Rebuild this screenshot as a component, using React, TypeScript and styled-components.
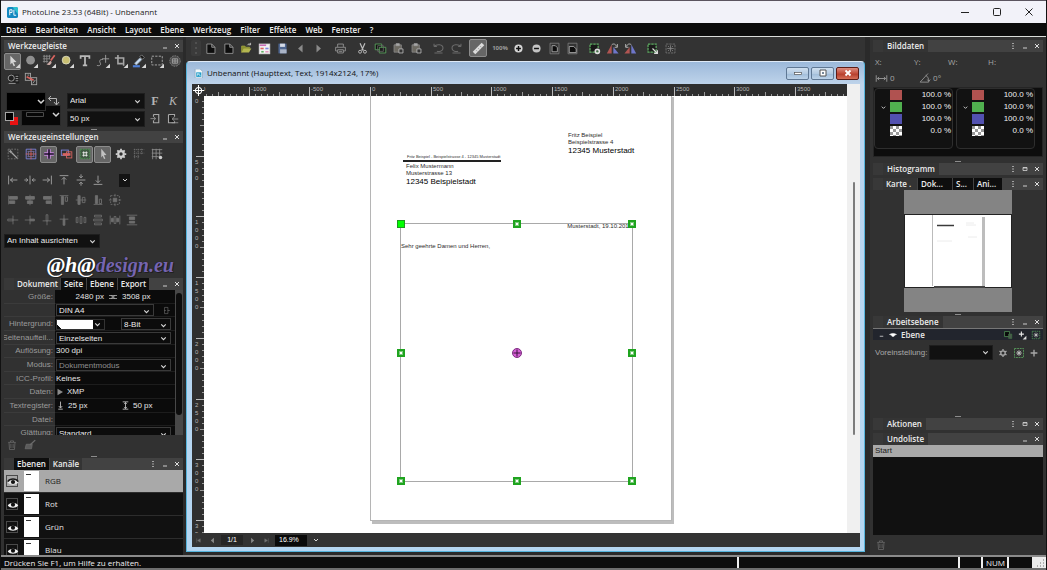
import React from "react";
import styled, { createGlobalStyle, css } from "styled-components";

const UI = '"Open Sans", "Noto Sans", sans-serif';
const NARROW = '"Liberation Sans", Arial, sans-serif';

const Global = createGlobalStyle`
  *, *::before, *::after { box-sizing: border-box; }
  body { margin: 0; background: #1c1c1c; }
  button, select, input { font: inherit; color: inherit; margin: 0; padding: 0; border: 0; background: none; }
  a { color: inherit; text-decoration: none; }
`;

/* ---------- icons ---------- */

const R = "#d9645f";
const B = "#7f86e0";
const G = "#5fae63";
const Y = "#c9bf72";

const corner = <path d="M16 11v5h-5z" fill="#d8d8d8" stroke="none" />;

const icons: Record<string, React.ReactNode> = {
  pointer: <><path d="M5 2l7 7-3.500.3 1.900 3.800-1.600.8-1.800-3.900L5 12z" fill="#d6d6d6" stroke="none" />{corner}</>,
  pointerPlain: <path d="M6 2l6 7-3 .3 1.700 3.700-1.500.7-1.700-3.700L6 12z" fill="#c2c2c2" stroke="none" />,
  ellipse: <><circle cx="7.500" cy="7" r="5" fill="#8f8f8f" stroke="none" />{corner}</>,
  gridBrush: <><path d="M1 2.500h9M1 5.500h8M1 8.500h6M2.500 1v9M5.500 1v9M8.500 1v5" stroke="#8a8a8a" /><path d="M14.500 1.500l-4.500 6" stroke={R} strokeWidth="2" /><path d="M10 8c-2 0-2 3-5 3.500 2 2 6 1 6-2.500z" fill="#c9a9a5" stroke="none" />{corner}</>,
  bulb: <><circle cx="7" cy="7" r="4.500" fill={Y} stroke="#d9d9c0" />{corner}</>,
  text: <path d="M3 5.500V2.500h10v3M8 2.500v11M5.500 13h5" strokeWidth="2" stroke="#b9b9b9" />,
  path: <><path d="M1 13c3 1 5-.5 4-2.500s-2-4 3-4.500M11 1v9M7 5.500h8" />{corner}</>,
  crop: <><path d="M4.500 1v10H10M1 4.500h10v9" strokeWidth="1.800" />{corner}</>,
  pipette: <><path d="M3 10.500l6-6 2 2-6 6z" fill="#c9dcef" stroke="#9ab" /><path d="M9 3l2-2 3 3-2 2z" fill="#111" stroke="#888" /><path d="M1 14h8" stroke="#4f80d8" strokeWidth="2.500" />{corner}</>,
  marquee: <><path d="M2 2.500h12v10H2z" strokeDasharray="2.500 1.500" stroke="#b5b5b5" />{corner}</>,
  globe: <><circle cx="8" cy="8" r="6" fill="#4c4c4c" stroke="#858585" strokeDasharray="2 1" /><path d="M5 5.500h6v5H5zM5 8h6M8 5.500v5" /></>,
  info: <><rect x="3" y="3" width="12" height="10" fill="#1f1f1f" stroke="none" /><circle cx="6" cy="7" r="3.500" /><path d="M11 5h3M11 7.500h3M11 10h3M3 13h8" /></>,
  replace: <><rect x="1.500" y="1.500" width="6" height="8" /><rect x="8.500" y="6.500" width="6" height="8" /><path d="M3 5.500l8 4" stroke={R} strokeWidth="2" /><path d="M10 13l3-4M4 3.500h2" /></>,
  toDoc: <><path d="M6 2h7v11H6v-3M6 2v3" strokeWidth="1.500" /><path d="M2 7.500h6M6 5l3 2.500L6 10" /></>,
  fromDoc: <><path d="M2 2h8v3M2 2v11h8v-2" strokeWidth="1.500" fill="#1b1b1b" /><path d="M7 8h8M9.500 5.500L7 8l2.500 2.500M6 13h9" /></>,
  wand: <><path d="M2.500 2.500h11v11h-11z" strokeDasharray="2 1.500" stroke="#777" /><path d="M6 6l7 7" strokeWidth="1.500" /><path d="M5 3v4M3 5h4" /></>,
  gridX: <><path d="M2.500 2.500h11v11h-11z" stroke={B} /><path d="M8 2v12M2 8h12" stroke={R} /><path d="M5 5v6M11 5v6M4 5h8M4 11h8" stroke="#7c6f9c" /></>,
  plusPurple: <><path d="M8 2.500v11M2.500 8h11" stroke="#c98be0" strokeWidth="4" /><path d="M8 2.500v11M2.500 8h11" stroke="#1a0c26" strokeWidth="1.800" /></>,
  mergeRB: <><rect x="1.500" y="3.500" width="8" height="6" stroke={B} /><rect x="7.500" y="5.500" width="6" height="7" stroke={R} /><path d="M3 8.500h9" stroke={R} strokeWidth="3" /></>,
  snap: <><path d="M2.500 2.500h11v11h-11z" stroke="#4f9a54" fill="#3f5a41" strokeDasharray="2 1" /><path d="M6.500 5v6M9.500 5v6M5 6.500h6M5 9.500h6" stroke="#ececec" /></>,
  gear: <><circle cx="8" cy="8" r="3.200" strokeWidth="2.500" stroke="#d0d0d0" /><path d="M8 2v2M8 12v2M2 8h2M12 8h2M3.800 3.800l1.500 1.500M10.700 10.700l1.500 1.500M12.200 3.800l-1.500 1.500M5.300 10.700l-1.500 1.500" strokeWidth="2" stroke="#d0d0d0" /></>,
  gearSmall: <><circle cx="8" cy="8" r="2.500" strokeWidth="1.500" /><path d="M8 3.500v2M8 10.500v2M4 5.800l1.700 1M10.300 9.200l1.700 1M12 5.800l-1.700 1M5.700 9.200l-1.700 1" strokeWidth="1.500" /></>,
  grid: <path d="M2 3h12M2 7h12M2 11h7M3 2v12M7 2v12M11 2v7" stroke="#6d6d6d" strokeDasharray="1.500 .8" />,
  gridDot: <><path d="M2 3h12M2 7h12M2 11h8M3 2v12M7 2v12M11 2v8" stroke="#8c8c8c" /><circle cx="12" cy="12" r="2" fill="#ccc" stroke="none" /></>,
  aL: <path d="M3 3v10M5 8h8M8 5.500L5 8l3 2.500" />,
  aC: <path d="M8 3v10M1.500 8h4M3.500 6l2 2-2 2M14.500 8h-4M12.500 6l-2 2 2 2" />,
  aR: <path d="M13 3v10M3 8h8M8 5.500L11 8l-3 2.500" />,
  aT: <path d="M3 3h10M8 5v8M5.500 7.500L8 5l2.500 2.500" />,
  aM: <path d="M3 8h10M8 1.500v4M6 3.500l2 2 2-2M8 14.500v-4M6 12.500l2-2 2 2" />,
  aB: <path d="M3 13h10M8 3v8M5.500 8.500L8 11l2.500-2.500" />,
  bL: <><path d="M3 3v10" /><path d="M4 4h9v3H4zM4 9h6v3H4z" fill="currentColor" /></>,
  bC: <><path d="M8 2v12" /><path d="M3 4h10v3H3zM5 9h6v3H5z" fill="currentColor" /></>,
  bR: <><path d="M13 3v10" /><path d="M4 4h8v3H4zM7 9h5v3H7z" fill="currentColor" /></>,
  bT: <><path d="M3 3h10" /><path d="M5 4h2.500v9H5z" fill="currentColor" /><path d="M9.500 4.500h2.500v5H9.500z" /></>,
  bM: <><path d="M2 8h12" /><path d="M4.500 3h2.500v10H4.500z" fill="currentColor" /><path d="M9.500 5h3v6h-3z" /></>,
  bB: <><path d="M3 13h10" /><path d="M5 3h2.500v9H5z" fill="currentColor" /><path d="M9.500 7h2.500v5H9.500z" /></>,
  bX: <><path d="M3 3h10v10H3z" strokeDasharray="2 1.500" /><path d="M6 6h4v4H6zM8 1v3M8 12v3M1 8h3M12 8h3" fill="currentColor" /></>,
  cA: <><path d="M8 3v10" /><path d="M2 7h6v2H2zM8 8h6" /></>,
  cB: <><path d="M8 3v10M2 8h6" /><path d="M8 7h5v2H8z" fill="currentColor" /></>,
  cC: <><path d="M3 9h10M8 9v5" /><path d="M7 2h2v7H7z" /></>,
  cD: <><path d="M3 7h10M8 2v5" /><path d="M7 7h2v7H7z" fill="currentColor" /></>,
  cE: <path d="M2.500 5h2v6h-2zM7 4h2v8H7zM11.500 5h2v6h-2z" />,
  cF: <path d="M4 2.500h8v2H4zM3 7h10v2H3zM4 11.500h8v2H4z" />,
  cG: <><path d="M2.500 3v10M13.500 3v10M7 4h2v8H7z" /><path d="M4 6h2v4H4zM10 6h2v4h-2z" fill="currentColor" /></>,
  cH: <><path d="M2 2.500h12M2 13.500h12" /><path d="M5 4.500h6v3H5zM5 9.500h6v2H5z" fill="currentColor" /></>,
  doc: <path d="M3.500 2.500h6l4 4v7.500h-10z M9.500 2.500v4h4" fill="#0d0d0d" stroke="#a0a0a0" />,
  open: <><path d="M2 13V5h4l1 1.500h5V8" fill="#8a8f2e" stroke="#9da03e" /><path d="M2 13l2.500-5H14l-3 5z" fill="#b4b650" stroke="none" /><path d="M9 4c1-2 3-2 4-1M13 1v2.500h-2.500" stroke="#ccc" /></>,
  browse: <><rect x="1.500" y="2.500" width="13" height="12" fill="#f4f4f4" stroke="#ddd" /><path d="M2 4h8" stroke="#c76fb8" strokeWidth="2" /><path d="M3 8h4" stroke={R} strokeWidth="2" /><path d="M9 8h4" stroke={B} strokeWidth="2" /><path d="M4 12h3" stroke={G} strokeWidth="2" /><path d="M9 12h4" stroke="#e09ac0" strokeWidth="2" /></>,
  save: <><path d="M3 2h10v12H3z" fill="#4f6791" stroke="none" /><path d="M5 2h6v4H5z" fill="#d5dbe6" stroke="none" /><path d="M5 9h8v5H5z" fill="#aab4c6" stroke="none" /></>,
  prev: <path d="M10.500 3v10L5 8z" fill="#8a8a8a" stroke="none" />,
  next: <path d="M5.500 3v10L11 8z" fill="#8a8a8a" stroke="none" />,
  print: <><path d="M4.500 6V2.500h7V6M4.500 11H2V6.500h12V11h-2.500" /><path d="M4.500 9.500h7v4h-7zM6 11.500h4" /></>,
  cut: <><path d="M5 1.500l4 9M11 1.500l-4 9" strokeWidth="1.500" stroke="#bdbdbd" /><circle cx="5" cy="12" r="1.800" stroke="#ccc" /><circle cx="11" cy="12" r="1.800" stroke="#ccc" /></>,
  copy: <><path d="M1.500 2.500h8v7h-8z" fill="#111" stroke={G} /><path d="M6.500 6.500h8v7h-8z" fill="#1c1c1c" stroke={G} /><path d="M4.500 4.500h7v7h-7z" stroke="#666" /></>,
  paste: <><path d="M2.500 3.500h9v9h-9z" fill="#6d6a62" stroke="#8a8a8a" /><path d="M5 2h4v2.500H5z" fill="#aaa" /><path d="M8.500 8.500h5v5h-5z" fill="#333" stroke="#bbb" /></>,
  undo: <path d="M2.500 5.500H6M2.500 5.500V2M2.500 5.500C6 2 13.500 3 13.500 7.500S8 12 6 11.500M3 13.500h10" stroke="#6a6a6a" strokeWidth="1.300" />,
  redo: <path d="M13.500 5.500H10M13.500 5.500V2M13.500 5.500C10 2 2.500 3 2.500 7.500S8 12 10 11.500M3 13.500h10" stroke="#6a6a6a" strokeWidth="1.300" />,
  measure: <><path d="M2.500 13.500l11-11" stroke="#dcdcdc" strokeWidth="4.500" /><path d="M5 10l1.500 1.500M7.500 7.500L9 9M10 5l1.500 1.500" stroke="#999" /></>,
  zoomIn: <><circle cx="8" cy="8" r="5" fill="#d5d5d5" stroke="none" /><path d="M8 5v6M5 8h6" stroke="#111" strokeWidth="1.800" /></>,
  zoomOut: <><circle cx="8" cy="8" r="5" fill="#c4c4c4" stroke="none" /><path d="M5 8h6" stroke="#111" strokeWidth="1.800" /></>,
  fitPage: <><path d="M2.500 1.500h11v13h-11z" stroke="#7d7d7d" /><path d="M5 4.500h4l2.500 2.500v5H5z" fill="#0d0d0d" stroke="#b5b5b5" /></>,
  fitWidth: <><path d="M2.500 1.500h11v13h-11z" stroke="#7d7d7d" /><path d="M4 5.500h5.500l3 3V13H4z" fill="#0d0d0d" stroke="#b5b5b5" /></>,
  selSettings: <><path d="M2.500 2.500h10v10h-10z" stroke={G} fill="#181818" strokeDasharray="3 1" strokeWidth="1.500" /><circle cx="11.500" cy="11.500" r="2.500" strokeWidth="2" stroke="#ddd" /></>,
  flipH: <><path d="M7 3v11H1z" fill="#b05552" stroke="none" /><path d="M9 6v8h6.500z" fill="#6e76c9" stroke="none" /><path d="M7 3.500c2-2 5-1 6 2M14 2.500v4h-3.500" stroke="#ccc" /></>,
  flipV: <><path d="M9 3v11h6z" fill="#6e76c9" stroke="none" /><path d="M7 6v8H.5z" fill="#b05552" stroke="none" /><path d="M9 3.500C7 1.500 4 2.500 3 5.500M2 2.500v4h3.500" stroke="#ccc" /></>,
  selArrow: <><path d="M2.500 2.500h10v10h-10z" stroke={G} fill="#1b1b1b" strokeDasharray="3 1" strokeWidth="1.500" /><path d="M8 8l6 6M14 10v4h-4" stroke="#ddd" strokeWidth="1.500" /></>,
  sheet: <><path d="M2.500 2.500h11v11h-11z" stroke="#777" strokeDasharray="3 1" /><path d="M8 4v8M4 8h8M5 5l1.500 1.500M11 5L9.500 6.500M5 11l1.500-1.500M11 11L9.500 9.500" stroke="#858585" /></>,
  trash: <path d="M3 4.500h10M6 4V2.500h4V4M4 4.500l.7 9.500h6.600l.7-9.500M6.500 6.500v5.500M9.500 6.500v5.500" />,
  brushDel: <><path d="M3 7h8l-1 6H1.500z" fill="#5b5b5b" /><path d="M8 8l7-6.500" strokeWidth="1.800" /></>,
  eye: <><path d="M1 8.500C4 4 12 4 15 8.500 12 12.500 4 12.500 1 8.500z" fill="#f4f4f4" stroke="none" /><circle cx="8" cy="7.500" r="2.800" fill="#111" stroke="none" /></>,
  eyeDark: <><path d="M1 8.500C4 4 12 4 15 8.500 12 12.500 4 12.500 1 8.500z" fill="#e4e4e4" stroke="none" /><path d="M1 7.500C4 3 12 3 15 7.500" stroke="#1a1a1a" strokeWidth="2" /><circle cx="8" cy="8" r="2.800" fill="#111" stroke="none" /></>,
  eyeSmall: <><path d="M1 7C5 4 11 4 15 7 11 9 5 9 1 7z" fill="#fff" stroke="#fff" /><circle cx="8" cy="8.500" r="3" fill="#fff" stroke="none" /></>,
  layerSel: <><path d="M2.500 2.500h8v8h-8z" fill="#0a0a0a" stroke={G} /><path d="M9 6.500h5v7H9z" fill="#4b5b4d" stroke="#3f7543" /></>,
  addBit: <><path d="M7 2.500v8M3 6.500h8" strokeWidth="1.800" /><path d="M15 9v6H9z" fill="#ddd" stroke="none" /></>,
  gearGreen: <><path d="M2 2h12v12H2z" stroke={G} strokeDasharray="2.500 1" /><path d="M8 4v8M4 8h8M5.200 5.200l5.600 5.600M10.800 5.200l-5.600 5.600" stroke="#b9b9b9" /><circle cx="8" cy="8" r="2" fill="#b9b9b9" stroke="none" /></>,
  plus: <path d="M8 3.500v9M3.500 8h9" strokeWidth="1.800" />,
  width: <path d="M1.500 4v8M14.500 4v8M3 8h10M5 6L3 8l2 2M11 6l2 2-2 2" />,
  angle: <path d="M1.500 13.500H13M1.500 13.500L12 2M9 4.500c3 1.500 4 4.500 4 8.500M11 10l2 2.500 2-2.500" />,
  chain: <path d="M0 5h16M0 11h16M4 5l4 3-4 3M12 5L8 8l4 3" strokeWidth="1.500" stroke="#bbb" />,
  orient: <path d="M4.500 2.500h6v11h-6zM10 8h4M4 8h3" stroke="#777" />,
  play: <path d="M3 1.500v13L14 8z" fill="#8a8a8a" stroke="none" />,
  down: <path d="M8 1v11M5 9l3 3.500L11 9M4 14.500h8" strokeWidth="1.500" stroke="#c9c9c9" />,
  upDown: <path d="M8 2v12M5.500 5.500L8 3l2.500 2.500M5.500 10.500L8 13l2.500-2.500M3 1.500h10M3 14.500h10" strokeWidth="1.500" stroke="#c9c9c9" />,
  chevron: <path d="M4 6l4 4 4-4" strokeWidth="2" stroke="#d9d9d9" />,
  first: <path d="M4 3v10M12 4v8L6 8z" fill="currentColor" />,
  last: <path d="M12 3v10M4 4v8l6-4z" fill="currentColor" />,
  origin: <><circle cx="8" cy="8" r="4.500" stroke="#fff" strokeWidth="1.500" /><path d="M8 0v16M0 8h16" stroke="#fff" strokeWidth="1.500" /></>,
  min: <path d="M4 12h8" strokeWidth="1.800" stroke="#ddd" />,
  restore: <path d="M4 5h8v6H4zM4 6h8" strokeWidth="1.500" stroke="#ddd" />,
  close: <path d="M4 4l8 8M12 4l-8 8" strokeWidth="2" stroke="#ddd" />,
  dots: <path d="M8 2v2M8 7v2M8 12v2" strokeWidth="2.500" stroke="#ddd" />,
};

const Svg = styled.svg<{ $s: number }>`
  display: block;
  flex: none;
  width: ${(p) => p.$s}px;
  height: ${(p) => p.$s}px;
`;

function Icon({ name, size = 14 }: { name: string; size?: number }) {
  return (
    <Svg $s={size} viewBox="0 0 16 16" fill="none" stroke="currentColor" aria-hidden="true">
      {icons[name]}
    </Svg>
  );
}

/* ---------- shell ---------- */

const Shell = styled.div`
  display: flex;
  flex-direction: column;
  height: 100vh;
  overflow: hidden;
  font: 8px/12px ${UI};
  color: #dcdcdc;
  background: #313131;
  border-left: 1px solid #111;
  border-right: 1px solid #111;
`;

const TitleBar = styled.header`
  flex: none;
  display: flex;
  align-items: center;
  gap: 4px;
  height: 23px;
  padding: 0 3px 0 6px;
  border-top: 1px solid #5b5560;
  background: #f2f2f9;
  color: #1b1b1b;
`;

const AppTitle = styled.h1`
  flex: 1;
  margin: 0;
  font-size: 8px;
  font-weight: 400;
`;

const CaptionButton = styled.button`
  display: grid;
  place-items: center;
  width: 28px;
  height: 22px;
`;

const MenuBar = styled.nav`
  flex: none;
  display: flex;
  align-items: center;
  gap: 9px;
  height: 14px;
  padding-left: 5px;
  background: #0c0c0c;
  border-bottom: 1px solid #d9dcd9;
  color: #f0f0f0;
  font-weight: 600;
`;

const Main = styled.main`
  flex: 1;
  min-height: 0;
  display: grid;
  grid-template-columns: 182px minmax(0, 1fr) 176px;
  grid-template-rows: minmax(0, 1fr);
`;

const Side = styled.aside<{ $right?: boolean }>`
  display: flex;
  flex-direction: column;
  min-height: 0;
  overflow: hidden;
  padding-top: 3px;
  padding-left: 3px;
  ${(p) => p.$right && css`
    padding-right: 3px;
  `}
`;

const Center = styled.section`
  display: flex;
  flex-direction: column;
  min-width: 0;
  padding: 0 5px 3px 3px;
  background: #2a2a2a;
`;

/* ---------- panels ---------- */

const Header = styled.header`
  flex: none;
  display: flex;
  align-items: center;
  height: 12px;
  background: #424242;
  color: #ececec;
  font-weight: 600;
`;

const Lead = styled.span`
  width: 10px;
  height: 12px;
  background: #383838;
`;

const PanelTitle = styled.h2<{ $boxed?: boolean }>`
  margin: 0;
  padding: 0 4px;
  font: inherit;
  line-height: 12px;
  background: ${(p) => (p.$boxed ? "#343434" : "transparent")};
`;

const Tab = styled.button<{ $dark?: boolean; $w?: number }>`
  height: 12px;
  line-height: 12px;
  padding: 0 3px;
  margin-right: 1px;
  text-align: left;
  white-space: nowrap;
  ${(p) => p.$w && `width: ${p.$w}px;`}
  background: ${(p) => (p.$dark ? "#0e0e0e" : "#343434")};
`;

const HeaderTools = styled.div`
  display: flex;
  gap: 4px;
  margin-left: auto;
  padding-right: 2px;
`;

const TinyButton = styled.button`
  display: grid;
  place-items: center;
  width: 8px;
  height: 12px;
`;

function Tools({ kinds }: { kinds: string[] }) {
  return (
    <HeaderTools>
      {kinds.map((k) => (
        <TinyButton key={k} aria-label={k}>
          <Icon name={k} size={8} />
        </TinyButton>
      ))}
    </HeaderTools>
  );
}

const Splitter = styled.div`
  flex: none;
  display: grid;
  place-items: center;
  height: 3px;
  &::after {
    content: "";
    width: 6px;
    height: 1px;
    background: #8c8c8c;
  }
`;

const IconRow = styled.div<{ $h?: number; $gap?: number; $dim?: boolean }>`
  flex: none;
  display: flex;
  align-items: center;
  gap: ${(p) => p.$gap ?? 1}px;
  height: ${(p) => p.$h ?? 18}px;
  color: ${(p) => (p.$dim ? "#6f6f6f" : "#a6a6a6")};
`;

const ToolButton = styled.button<{ $on?: boolean; $gap?: boolean }>`
  flex: none;
  display: grid;
  place-items: center;
  width: 17px;
  height: 17px;
  border-radius: 2px;
  margin-left: ${(p) => (p.$gap ? 4 : 0)}px;
  ${(p) => p.$on && css`
    background: #666;
    border: 1px solid #8c8c8c;
  `}
`;

const SelectWrap = styled.div<{ $w?: number; $h?: number; $flat?: boolean; $dim?: boolean }>`
  display: grid;
  align-items: center;
  ${(p) => (p.$w ? `width: ${p.$w}px; flex: none;` : "flex: 1;")}
  height: ${(p) => p.$h ?? 16}px;
  background: ${(p) => (p.$flat ? "#0c0c0c" : "#111")};
  border: 1px solid ${(p) => (p.$flat ? "#3a3a3a" : "#1e1e1e")};
  color: ${(p) => (p.$dim ? "#8f8f8f" : "#ececec")};
  font-family: ${NARROW};
  > * { grid-area: 1 / 1; }
  > svg { justify-self: end; margin-right: 2px; pointer-events: none; }
`;

const NativeSelect = styled.select`
  appearance: none;
  width: 100%;
  height: 100%;
  padding-left: 2px;
  outline: 0;
`;

type SelectProps = { label: string; value: string; w?: number; h?: number; flat?: boolean; dim?: boolean };
function Select({ label, value, w, h, flat, dim }: SelectProps) {
  return (
    <SelectWrap $w={w} $h={h} $flat={flat} $dim={dim}>
      <NativeSelect aria-label={label} defaultValue={value}>
        <option>{value}</option>
      </NativeSelect>
      <Icon name="chevron" size={9} />
    </SelectWrap>
  );
}

/* ---------- left column ---------- */

const Style = styled.section`
  flex: none;
  display: flex;
  gap: 5px;
  height: 40px;
  padding-top: 4px;
`;

const ColorWell = styled.svg`
  display: block;
  flex: none;
  width: 57px;
  height: 35px;
`;

const FontControls = styled.div`
  display: grid;
  grid-template-columns: 80px 18px 18px;
  grid-template-rows: 18px 18px;
  align-items: center;
  align-content: start;
  justify-items: center;
  color: #a6a6a6;
`;

const GlyphButton = styled.button<{ $italic?: boolean }>`
  font: ${(p) => (p.$italic ? "italic 400" : "normal 700")} 12px/16px "Liberation Serif", serif;
  color: #b4b4b4;
`;

const SettingsRows = styled.div`
  padding: 5px 0 4px;
`;

const DropButton = styled.button`
  display: grid;
  place-items: center;
  width: 11px;
  height: 13px;
  margin-left: 13px;
  background: #141414;
`;

const Brand = styled.p`
  flex: none;
  display: flex;
  align-items: center;
  justify-content: flex-end;
  height: 30px;
  margin: 0;
  padding: 4px 9px 0 0;
  font: italic 700 20px/26px "Liberation Serif", serif;
  color: #7665b0;
  text-shadow: 0 0 1px #111, 1px 1px 0 #222;
`;

const BrandStart = styled.span`
  color: #fff;
  font-size: 22px;
`;

const DocPanel = styled.div`
  flex: none;
  display: flex;
  height: 145px;
  overflow: hidden;
  font-family: ${NARROW};
`;

const DocRows = styled.div`
  flex: 1;
  display: flex;
  flex-direction: column;
  height: 150px;
`;

const DocRow = styled.div`
  flex: 1;
  display: flex;
  min-height: 0;
`;

const DocLabel = styled.span`
  display: flex;
  align-items: center;
  justify-content: flex-end;
  width: 51px;
  padding: 1px 2px 0 0;
  color: #9b9b9b;
  white-space: nowrap;
  border-bottom: 1px solid #3b3b3b;
`;

const DocValue = styled.div<{ $gap?: number }>`
  flex: 1;
  display: flex;
  align-items: center;
  gap: ${(p) => p.$gap ?? 3}px;
  padding: 1px 4px 0 1px;
  background: #0b0b0b;
  border-bottom: 1px solid #1d1d1d;
  color: #e6e6e6;
  white-space: nowrap;
`;

const Field = styled.span<{ $w?: number; $end?: boolean }>`
  ${(p) => p.$w && `width: ${p.$w}px;`}
  text-align: ${(p) => (p.$end ? "right" : "left")};
`;

const Background = styled.button`
  display: grid;
  grid-template-columns: 1fr 9px;
  align-items: center;
  width: 49px;
  height: 11px;
  border: 1px solid #333;
  padding-right: 2px;
`;

const Swatch = styled.span`
  height: 9px;
  background: linear-gradient(45deg, #0b0b0b 3px, #fff 3px);
`;

const Track = styled.div`
  width: 8px;
  padding: 3px 1px;
  background: #484848;
`;

const Thumb = styled.div`
  width: 6px;
  height: 122px;
  border-radius: 3px;
  background: #0d0d0d;
`;

const FootIcons = styled.div`
  flex: none;
  display: flex;
  align-items: center;
  gap: 6px;
  height: 20px;
  padding-left: 2px;
  color: #6c6c6c;
`;

const Channels = styled.ul`
  flex: 1;
  min-height: 0;
  margin: 0;
  padding: 0;
  list-style: none;
  overflow: hidden;
`;

const Channel = styled.li<{ $active?: boolean }>`
  display: flex;
  align-items: center;
  gap: 6px;
  height: 23px;
  padding-left: 2px;
  border-bottom: 1px solid #2d2d2d;
  background: ${(p) => (p.$active ? "#a9a9a9" : "#111")};
  color: ${(p) => (p.$active ? "#222" : "#e4e4e4")};
`;

const EyeButton = styled.button`
  display: grid;
  place-items: center;
  width: 12px;
  height: 12px;
  border: 1px solid #4a4a4a;
`;

const Thumbnail = styled.span`
  width: 15px;
  height: 20px;
  padding: 3px 2px;
  background: #fff;
  &::after {
    content: "";
    display: block;
    width: 5px;
    height: 1px;
    background: #333;
  }
`;

/* ---------- document window ---------- */

const TopTools = styled.div`
  flex: none;
  display: flex;
  align-items: center;
  height: 24px;
  padding: 0 0 2px 5px;
  overflow: hidden;
  background: #333;
  color: #9b9b9b;
`;

const GripDots = styled.span`
  flex: none;
  width: 10px;
  height: 16px;
  border-radius: 2px;
  background: radial-gradient(circle, #666 1px, transparent 1px) center / 10px 5px #3b3b3b;
`;

const TopButton = styled(ToolButton)`
  width: 18px;
  height: 18px;
  font-size: 6px;
  font-weight: 700;
`;

const Window = styled.section`
  flex: 1;
  min-height: 0;
  display: flex;
  flex-direction: column;
  padding: 0 4px 4px 5px;
  border: 1px solid #56b4dc;
  border-top-color: #dfeaf6;
  border-radius: 4px 4px 0 0;
  background: linear-gradient(#9cb9da 0, #bed3ea 22px, #b9d4ef 80px, #b5d6f1);
`;

const WindowTitle = styled.header`
  flex: none;
  display: flex;
  align-items: center;
  gap: 4px;
  height: 22px;
  padding-left: 2px;
  color: #111;
`;

const WindowName = styled.h2`
  flex: 1;
  margin: 0;
  font: inherit;
  white-space: nowrap;
`;

const WindowButtons = styled.div`
  display: flex;
  gap: 2px;
  padding-right: 1px;
`;

const WindowButton = styled.button<{ $danger?: boolean }>`
  display: grid;
  place-items: center;
  width: 23px;
  height: 13px;
  border: 1px solid ${(p) => (p.$danger ? "#5d1c16" : "#5f7894")};
  border-radius: 2px;
  color: #fff;
  background: ${(p) =>
    p.$danger
      ? "linear-gradient(#dc8d80, #c04a38 50%, #b33a29 51%, #d56f58)"
      : "linear-gradient(#cfdfef, #b4cbe2 50%, #9fbbd8 51%, #bcd3e9)"};
`;

const Work = styled.div`
  flex: 1;
  min-height: 0;
  display: grid;
  grid-template-columns: 12px minmax(0, 1fr) 13px;
  grid-template-rows: 12px minmax(0, 1fr);
`;

const RulerCorner = styled.div`
  display: grid;
  place-items: center;
  background: #2f2f2f;
`;

const Ruler = styled.svg`
  display: block;
  width: 100%;
  height: 100%;
  min-height: 0;
  background: #2f2f2f;
  overflow: hidden;
  text { font: 6px ${NARROW}; fill: #b5b5b5; }
`;

const ScrollColumn = styled.div`
  grid-column: 3;
  grid-row: 1 / 3;
  display: flex;
  flex-direction: column;
  align-items: center;
  padding: 98px 0;
  background: #f0f0f0;
`;

const ScrollThumb = styled.div`
  flex: 1;
  width: 2px;
  border-radius: 1px;
  background: #7c7c7c;
`;

const Canvas = styled.div`
  position: relative;
  overflow: hidden;
  background: #fff;
`;

const Paper = styled.article`
  position: absolute;
  left: 166px;
  top: -2px;
  width: 302px;
  height: 427px;
  background: #fff;
  border: 1px solid #b5b5b5;
  box-shadow: 2px 3px 0 #bdbdbd;
  color: #2c2c2c;
  font: 6px/7px ${NARROW};
`;

const Address = styled.address<{ $x: number; $y: number }>`
  position: absolute;
  left: ${(p) => p.$x}px;
  top: ${(p) => p.$y}px;
  font-style: normal;
  white-space: nowrap;
`;

const City = styled.strong`
  display: block;
  font-size: 8px;
  line-height: 10px;
  font-weight: 400;
  color: #000;
`;

const ReturnLine = styled.div`
  position: absolute;
  left: 32px;
  top: 59px;
  width: 98px;
  height: 8px;
  padding-left: 4px;
  font-size: 4px;
  line-height: 6px;
  white-space: nowrap;
  border-bottom: 2px solid #222;
`;

const TextFrame = styled.div`
  position: absolute;
  left: 29px;
  top: 128px;
  width: 233px;
  height: 259px;
  border: 1px solid #a9a9a9;
`;

const DateLine = styled.p`
  margin: 0;
  text-align: right;
  line-height: 4px;
`;

const Salutation = styled.p`
  margin: 14px 0 0;
  line-height: 8px;
`;

const Handle = styled.span<{ $x: number; $y: number; $solid?: boolean }>`
  position: absolute;
  left: calc(${(p) => p.$x}% - 4px);
  top: calc(${(p) => p.$y}% - 4px);
  width: 8px;
  height: 8px;
  background: ${(p) => (p.$solid ? "#0f0" : "#fff")};
  border: ${(p) => (p.$solid ? "1px solid #1c9a1c" : "2px solid #1fa41f")};
  box-shadow: ${(p) => (p.$solid ? "none" : "inset 0 0 0 1px #7cc97c")};
`;

const Pivot = styled.svg`
  position: absolute;
  left: calc(50% - 5px);
  top: calc(50% - 5px);
  width: 10px;
  height: 10px;
`;

const WindowFoot = styled.footer`
  flex: none;
  display: flex;
  align-items: center;
  gap: 4px;
  height: 14px;
  padding-left: 1px;
  background: #333;
  color: #757575;
  font: 8px/12px ${NARROW};
`;

const FootButton = styled.button`
  display: grid;
  place-items: center;
  width: 10px;
  height: 12px;
`;

const PageBox = styled.output`
  width: 22px;
  height: 10px;
  line-height: 10px;
  text-align: center;
  color: #fff;
  background: #262626;
  font-size: 7px;
`;

const ZoomInput = styled.input`
  && {
    width: 32px;
    height: 11px;
    padding-left: 4px;
    background: #0a0a0a;
    color: #fff;
    font-size: 7px;
  }
`;

/* ---------- right column ---------- */

const Coords = styled.div`
  display: flex;
  align-items: center;
  height: 16px;
  padding: 0 2px;
  color: #a5a5a5;
`;

const Coord = styled.span<{ $w: number }>`
  width: ${(p) => p.$w}px;
`;

const Info = styled.div`
  flex: none;
  height: 35px;
  padding-top: 2px;
`;

const Samples = styled.div`
  flex: none;
  display: flex;
  gap: 3px;
  height: 70px;
  background: #0d0d0d;
  border: 1px solid #252525;
`;

const Sample = styled.section`
  display: grid;
  grid-template-columns: 14px 1fr;
  align-items: start;
  width: 79px;
  height: 61px;
  padding: 0 1px;
  border: 1px solid #2e2e2e;
  border-radius: 4px;
  background: #121212;
`;

const SampleToggle = styled.button`
  display: grid;
  place-items: center;
  height: 36px;
`;

const SampleTable = styled.table`
  width: 100%;
  border-collapse: collapse;
  font-family: ${NARROW};
  color: #f0f0f0;
  td { height: 12px; padding: 0; line-height: 12px; text-align: right; }
`;

const ColorChip = styled.span<{ $c: string }>`
  display: block;
  width: 12px;
  height: 10px;
  background: ${(p) => p.$c};
`;

const MapWrap = styled.div`
  flex: none;
  display: flex;
  justify-content: center;
  height: 123px;
`;

const MapSvg = styled.svg`
  display: block;
  width: 108px;
  height: 122px;
`;

const WorkLayer = styled.div`
  flex: none;
  display: flex;
  align-items: center;
  gap: 4px;
  height: 12px;
  padding: 0 0 0 5px;
  background: #22252d;
  border-top: 1px solid #777;
  font-weight: 600;
  color: #e8e8e8;
`;

const Preset = styled.div`
  flex: none;
  display: flex;
  align-items: center;
  gap: 3px;
  height: 75px;
  padding: 0 2px 50px 2px;
  color: #a8a8a8;
`;

const PresetLabel = styled.span`
  width: 51px;
  white-space: nowrap;
  font-family: ${NARROW};
`;

const Gap = styled.div`
  flex: none;
  height: 3px;
`;

const UndoList = styled.ul`
  flex: 1;
  min-height: 0;
  margin: 0;
  padding: 0;
  list-style: none;
  background: #111;
`;

const UndoItem = styled.li`
  height: 12px;
  padding-left: 2px;
  line-height: 12px;
  color: #1b1b1b;
  background: #a9a9a9;
  font-family: ${NARROW};
`;

/* ---------- status ---------- */

const Status = styled.footer`
  flex: none;
  display: flex;
  height: 15px;
  border-top: 2px solid #8b8b8b;
  border-bottom: 2px solid #6e6e6e;
  background: #0d0d0d;
  color: #efefef;
  line-height: 11px;
`;

const StatusCell = styled.span<{ $w?: number }>`
  ${(p) => (p.$w ? `width: ${p.$w}px;` : "flex: 1;")}
  padding-left: 3px;
  border-left: 2px solid #efefef;
  white-space: nowrap;
  &:first-child { border-left: 0; }
`;

const SizeGrip = styled.svg`
  display: block;
  width: 14px;
  height: 11px;
  background: #ececec;
`;

/* ---------- data ---------- */

const menus = ["Datei", "Bearbeiten", "Ansicht", "Layout", "Ebene", "Werkzeug", "Filter", "Effekte", "Web", "Fenster", "?"];
const tools = ["pointer", "ellipse", "gridBrush", "bulb", "text", "path", "crop", "pipette", "marquee", "globe"];
const topTools: [string, boolean?, boolean?][] = [
  ["doc"], ["doc"], ["open"], ["browse"], ["save"], ["prev"], ["next"], ["print", true], ["cut", true],
  ["copy"], ["paste"], ["paste"], ["undo", true], ["redo"], ["measure", true, true], ["100%", true],
  ["zoomIn"], ["zoomOut"], ["fitPage"], ["fitWidth"], ["selSettings", true], ["flipH"], ["flipV"],
  ["selArrow", true], ["sheet"],
];
const samples: [string, string][] = [
  ["#b05250", "100.0 %"],
  ["#50b04f", "100.0 %"],
  ["#5251b0", "100.0 %"],
  ["repeating-conic-gradient(#fff 0 25%, #999 0 50%) 0 0 / 6px 6px", "0.0 %"],
];
const handles: [number, number][] = [[0, 0], [50, 0], [100, 0], [0, 50], [100, 50], [0, 100], [50, 100], [100, 100]];

const STEP = 607; // length of 500 units, in tenths of a pixel

/* Draws only the ticks that fit the ruler's current length. */
function useLength(axis: "width" | "height") {
  const ref = React.useRef<SVGSVGElement>(null);
  const [length, setLength] = React.useState(0);
  React.useLayoutEffect(() => {
    const el = ref.current;
    if (!el) return;
    const read = () => setLength(el.getBoundingClientRect()[axis]);
    read();
    const watch = new ResizeObserver(read);
    watch.observe(el);
    return () => watch.disconnect();
  }, [axis]);
  return [ref, length] as const;
}

function HorizontalRuler() {
  const [ref, length] = useLength("width");
  const ticks: React.ReactNode[] = [];
  for (let i = -30; 166 + (i * STEP) / 100 < length; i++) {
    const x = Math.round(166 + (i * STEP) / 100);
    const major = i % 10 === 0;
    const mid = i % 5 === 0;
    ticks.push(<path key={i} d={`M${x}.5 ${major ? 3 : mid ? 8 : 10}V12`} stroke={major ? "#bbb" : "#999"} />);
    if (major && x + 16 < length) ticks.push(<text key={`t${i}`} x={x + 2} y="7">{i * 50}</text>);
  }
  return <Ruler ref={ref} aria-hidden="true">{ticks}</Ruler>;
}

function VerticalRuler() {
  const [ref, length] = useLength("height");
  const ticks: React.ReactNode[] = [];
  for (let i = 0; (i * STEP) / 100 - 1 < length; i++) {
    const y = Math.round(-1 + (i * STEP) / 100);
    const major = i % 10 === 0;
    const mid = i % 5 === 0;
    ticks.push(<path key={i} d={`M${major ? 4 : mid ? 8 : 10} ${y}.5H12`} stroke={major ? "#bbb" : "#999"} />);
    if (major) {
      String(i * 50).split("").forEach((ch, n) => {
        const base = y + 8 + n * 8;
        if (base < length + 4) ticks.push(<text key={`t${i}-${n}`} x="3" y={base}>{ch}</text>);
      });
    }
  }
  return <Ruler ref={ref} aria-hidden="true">{ticks}</Ruler>;
}

function Buttons({ names, on = [] }: { names: string[]; on?: string[] }) {
  return (
    <>
      {names.map((n) => (
        <ToolButton key={n} $on={on.includes(n)} aria-label={n}>
          <Icon name={n} />
        </ToolButton>
      ))}
    </>
  );
}

function Row({ label, gap, children }: { label: string; gap?: number; children?: React.ReactNode }) {
  return (
    <DocRow>
      <DocLabel>{label}</DocLabel>
      <DocValue $gap={gap}>{children}</DocValue>
    </DocRow>
  );
}

function LeftColumn() {
  return (
    <Side>
      <Header>
        <PanelTitle>Werkzeugleiste</PanelTitle>
        <Tools kinds={["min", "close"]} />
      </Header>
      <IconRow><Buttons names={tools} on={["pointer"]} /></IconRow>
      <IconRow><Buttons names={["info", "replace"]} /></IconRow>
      <Style>
        <ColorWell viewBox="0 0 57 35" fill="none" role="img" aria-label="Farben">
          <rect x="17.500" y="13.500" width="39" height="20" fill="#070707" stroke="#2b2b2b" />
          <path d="M22.500 20.500h17v4h-17z" stroke="#4a4a4a" />
          <rect x="2.500" y=".5" width="39" height="18" fill="#000" stroke="#2b2b2b" />
          <path d="M34 8l3 3 3-3M49 21l3 3 3-3" stroke="#d5d5d5" strokeWidth="1.500" />
          <path d="M44.500 6.500h8v6M47 4l-2.500 2.500L47 9M50 10l2.500 3 2.500-3" stroke="#b5b5b5" />
          <rect x="6" y="25" width="8" height="8" fill="#e81212" />
          <rect x="1.500" y="20.500" width="8" height="8" fill="#000" stroke="#a5a5a5" />
        </ColorWell>
        <FontControls>
          <Select label="Schrift" value="Arial" w={78} />
          <GlyphButton>F</GlyphButton>
          <GlyphButton $italic>K</GlyphButton>
          <Select label="Schriftgröße" value="50 px" w={78} />
          <ToolButton aria-label="Stil übernehmen"><Icon name="toDoc" size={12} /></ToolButton>
          <ToolButton aria-label="Stil ablegen"><Icon name="fromDoc" size={12} /></ToolButton>
        </FontControls>
      </Style>
      <Splitter />
      <Header>
        <PanelTitle>Werkzeugeinstellungen</PanelTitle>
        <Tools kinds={["min", "close"]} />
      </Header>
      <IconRow $h={22}>
        <Buttons
          names={["wand", "gridX", "plusPurple", "mergeRB", "snap", "pointerPlain", "gear", "grid", "gridDot"]}
          on={["plusPurple", "snap", "pointerPlain"]}
        />
      </IconRow>
      <SettingsRows>
        <IconRow $h={20} $gap={0}>
          <Buttons names={["aL", "aC", "aR", "aT", "aM", "aB"]} />
          <DropButton aria-label="Mehr"><Icon name="chevron" size={8} /></DropButton>
        </IconRow>
        <IconRow $h={20} $gap={0} $dim><Buttons names={["bL", "bC", "bR", "bT", "bM", "bB", "bX"]} /></IconRow>
        <IconRow $h={20} $gap={0} $dim><Buttons names={["cA", "cB", "cC", "cD", "cE", "cF", "cG", "cH"]} /></IconRow>
      </SettingsRows>
      <Select label="Ausrichtung" value="An Inhalt ausrichten" w={96} h={14} />
      <Brand><BrandStart>@h@</BrandStart>design.eu</Brand>
      <Header>
        <Lead />
        <Tab $w={46}>Dokument</Tab>
        <Tab $dark>Seite</Tab>
        <Tab $dark>Ebene</Tab>
        <Tab $dark>Export</Tab>
        <Tools kinds={["min", "close"]} />
      </Header>
      <DocPanel>
        <DocRows>
          <Row label="Größe:" gap={5}>
            <Field $w={48} $end>2480 px</Field>
            <Icon name="chain" size={8} />
            <Field>3508 px</Field>
          </Row>
          <Row label="" gap={8}>
            <Select label="Format" value="DIN A4" w={98} h={12} flat />
            <Icon name="orient" size={9} />
          </Row>
          <Row label="Hintergrund:" gap={16}>
            <Background aria-label="Hintergrundfarbe"><Swatch /><Icon name="chevron" size={9} /></Background>
            <Select label="Farbtiefe" value="8-Bit" h={12} flat />
          </Row>
          <Row label="Seitenaufteil..."><Select label="Seitenaufteilung" value="Einzelseiten" h={12} flat /></Row>
          <Row label="Auflösung:">300 dpi</Row>
          <Row label="Modus:"><Select label="Modus" value="Dokumentmodus" h={12} flat dim /></Row>
          <Row label="ICC-Profil:">Keines</Row>
          <Row label="Daten:"><Icon name="play" size={8} />XMP</Row>
          <Row label="Textregister:">
            <Icon name="down" size={9} />
            <Field $w={50}>25 px</Field>
            <Icon name="upDown" size={9} />
            <Field>50 px</Field>
          </Row>
          <Row label="Datei:" />
          <Row label="Glättung:"><Select label="Glättung" value="Standard" h={12} flat /></Row>
        </DocRows>
        <Track><Thumb /></Track>
      </DocPanel>
      <FootIcons>
        <Icon name="trash" size={12} />
        <Icon name="brushDel" size={12} />
      </FootIcons>
      <Splitter />
      <Header>
        <Lead />
        <Tab $dark>Ebenen</Tab>
        <Tab>Kanäle</Tab>
        <Tools kinds={["dots", "min", "close"]} />
      </Header>
      <Channels>
        {["RGB", "Rot", "Grün", "Blau"].map((c, i) => (
          <Channel key={c} $active={i === 0}>
            <EyeButton aria-label={`${c} sichtbar`}><Icon name={i === 0 ? "eyeDark" : "eye"} size={12} /></EyeButton>
            <Thumbnail />
            <span>{c}</span>
          </Channel>
        ))}
      </Channels>
    </Side>
  );
}

function DocumentWindow() {
  return (
    <Window>
      <WindowTitle>
        <Svg $s={9} viewBox="0 0 16 16" aria-hidden="true">
          <path d="M2 0h9l4 4v12H2z" fill="#f2f8fb" stroke="#7a9ab5" />
          <rect x="4" y="6" width="9" height="8" fill="#1899c8" />
          <path d="M6 12V8h2v2H6M10 8v4h2" stroke="#fff" fill="none" />
        </Svg>
        <WindowName>Unbenannt (Haupttext, Text, 1914x2124, 17%)</WindowName>
        <WindowButtons>
          <WindowButton aria-label="Minimieren">
            <Svg $s={10} viewBox="0 0 10 10"><rect x="1.500" y="4.500" width="7" height="2" fill="#fff" stroke="#555" strokeWidth=".7" /></Svg>
          </WindowButton>
          <WindowButton aria-label="Maximieren">
            <Svg $s={10} viewBox="0 0 10 10"><path d="M2 2h6v6H2z" fill="#fff" stroke="#555" /><path d="M4 4h2v2H4z" fill="#789" /></Svg>
          </WindowButton>
          <WindowButton $danger aria-label="Schließen">
            <Svg $s={10} viewBox="0 0 10 10"><path d="M2.500 2.500l5 5M7.500 2.500l-5 5" stroke="#fff" strokeWidth="1.800" /></Svg>
          </WindowButton>
        </WindowButtons>
      </WindowTitle>
      <Work>
        <RulerCorner><Icon name="origin" size={11} /></RulerCorner>
        <HorizontalRuler />
        <ScrollColumn><ScrollThumb /></ScrollColumn>
        <VerticalRuler />
        <Canvas>
          <Paper>
            <Address $x={197} $y={37}>
              Fritz Beispiel<br />Beispielstrasse 4<City>12345 Musterstadt</City>
            </Address>
            <ReturnLine>Fritz Beispiel - Beispielstrasse 4 - 12345 Musterstadt</ReturnLine>
            <Address $x={35} $y={68}>
              Felix Mustermann<br />Musterstrasse 13<City>12345 Beispielstadt</City>
            </Address>
            <TextFrame>
              <DateLine>Musterstadt, 19.10.2012</DateLine>
              <Salutation>Sehr geehrte Damen und Herren,</Salutation>
              {handles.map(([x, y]) => (
                <Handle key={`${x}-${y}`} $x={x} $y={y} $solid={x === 0 && y === 0} />
              ))}
              <Pivot viewBox="0 0 10 10">
                <circle cx="5" cy="5" r="4.500" fill="#d45fd4" stroke="#7d2d80" />
                <path d="M5 1.500v7M1.500 5h7" stroke="#3d123f" />
              </Pivot>
            </TextFrame>
          </Paper>
        </Canvas>
      </Work>
      <WindowFoot>
        <FootButton aria-label="Erste Seite"><Icon name="first" size={7} /></FootButton>
        <FootButton aria-label="Vorige Seite"><Icon name="prev" size={9} /></FootButton>
        <PageBox>1/1</PageBox>
        <FootButton aria-label="Nächste Seite"><Icon name="next" size={9} /></FootButton>
        <FootButton aria-label="Letzte Seite"><Icon name="last" size={7} /></FootButton>
        <ZoomInput aria-label="Zoom" defaultValue="16.9%" />
        <FootButton aria-label="Zoomstufen"><Icon name="chevron" size={8} /></FootButton>
      </WindowFoot>
    </Window>
  );
}

function RightColumn() {
  return (
    <Side $right>
      <Header>
        <Lead />
        <PanelTitle $boxed>Bilddaten</PanelTitle>
        <Tools kinds={["dots", "min", "close"]} />
      </Header>
      <Info>
        <Coords>
          <Coord $w={39}>X:</Coord><Coord $w={34}>Y:</Coord><Coord $w={40}>W:</Coord><Coord $w={30}>H:</Coord>
        </Coords>
        <Coords>
          <Icon name="width" size={13} />
          <Coord $w={31}>&nbsp;0</Coord>
          <Icon name="angle" size={12} />
          <Coord $w={30}>&nbsp;0°</Coord>
        </Coords>
      </Info>
      <Samples>
        {[0, 1].map((n) => (
          <Sample key={n}>
            <SampleToggle aria-label="Farbmodell"><Icon name="chevron" size={7} /></SampleToggle>
            <SampleTable>
              <tbody>
                {samples.map(([c, v], i) => (
                  <tr key={i}><td><ColorChip $c={c} /></td><td>{v}</td></tr>
                ))}
              </tbody>
            </SampleTable>
          </Sample>
        ))}
      </Samples>
      <Gap />
      <Splitter />
      <Header>
        <Lead />
        <PanelTitle $boxed>Histogramm</PanelTitle>
        <Tools kinds={["dots", "restore", "close"]} />
      </Header>
      <Gap />
      <Header>
        <Lead />
        <Tab $w={34}>Karte .</Tab>
        <Tab $dark $w={34}>Dok...</Tab>
        <Tab $dark $w={20}>S...</Tab>
        <Tab $dark $w={28}>Ani...</Tab>
        <Tools kinds={["dots", "min", "close"]} />
      </Header>
      <MapWrap>
        <MapSvg viewBox="0 0 108 122" role="img" aria-label="Karte">
          <rect width="108" height="122" fill="#848484" />
          <rect x=".5" y="24.500" width="107" height="73" fill="#fff" stroke="#222" />
          <path d="M28.500 25v71" stroke="#bbb" />
          <path d="M79.500 27v70" stroke="#bdbdbd" strokeWidth="3" />
          <path d="M30 97h51" stroke="#444" strokeWidth="2" />
          <path d="M33 35.500h17" stroke="#3a3a3a" strokeWidth="1.500" />
          <path d="M62 33h8M62 35h10M64 47h9M33 51h15" stroke="#ececec" />
        </MapSvg>
      </MapWrap>
      <Splitter />
      <Header>
        <Lead />
        <PanelTitle $boxed>Arbeitsebene</PanelTitle>
        <Tools kinds={["dots", "min", "close"]} />
      </Header>
      <WorkLayer>
        <Icon name="min" size={7} />
        <Icon name="eyeSmall" size={8} />
        Ebene
        <HeaderTools>
          <Icon name="layerSel" size={10} />
          <Icon name="addBit" size={10} />
          <Icon name="gearGreen" size={10} />
        </HeaderTools>
      </WorkLayer>
      <Preset>
        <PresetLabel>Voreinstellung:</PresetLabel>
        <Select label="Voreinstellung" value="" w={64} h={15} />
        <Icon name="gearSmall" size={14} />
        <Icon name="gearGreen" size={12} />
        <Icon name="plus" size={12} />
      </Preset>
      <Splitter />
      <Header>
        <Lead />
        <PanelTitle $boxed>Aktionen</PanelTitle>
        <Tools kinds={["dots", "restore", "close"]} />
      </Header>
      <Gap />
      <Header>
        <Lead />
        <PanelTitle $boxed>Undoliste</PanelTitle>
        <Tools kinds={["min", "close"]} />
      </Header>
      <UndoList>
        <UndoItem>Start</UndoItem>
      </UndoList>
      <FootIcons><Icon name="trash" size={12} /></FootIcons>
    </Side>
  );
}

export default function App() {
  return (
    <Shell>
      <Global />
      <TitleBar>
        <Svg $s={11} viewBox="0 0 12 12" aria-hidden="true">
          <rect width="12" height="12" rx="2" fill="#1487c0" />
          <path d="M6 0h4a2 2 0 012 2v6z" fill="#2fc0cf" />
          <path d="M3 9V3h2.500v3H3M7.500 3v6H10" stroke="#fff" fill="none" />
        </Svg>
        <AppTitle>PhotoLine 23.53 (64Bit) - Unbenannt</AppTitle>
        <CaptionButton aria-label="Minimieren"><Svg $s={8} viewBox="0 0 8 8"><path d="M0 4.500h8" stroke="#222" /></Svg></CaptionButton>
        <CaptionButton aria-label="Maximieren"><Svg $s={8} viewBox="0 0 8 8"><rect x=".5" y=".5" width="7" height="7" rx="1" fill="none" stroke="#222" /></Svg></CaptionButton>
        <CaptionButton aria-label="Schließen"><Svg $s={8} viewBox="0 0 8 8"><path d="M.5.5l7 7M7.500.5l-7 7" stroke="#222" /></Svg></CaptionButton>
      </TitleBar>
      <MenuBar>
        {menus.map((m) => <a key={m} href="#">{m}</a>)}
      </MenuBar>
      <Main>
        <LeftColumn />
        <Center>
          <TopTools>
            <GripDots />
            {topTools.map(([n, gap, on], i) => (
              <TopButton key={i} $gap={gap} $on={on} aria-label={n}>
                {icons[n] ? <Icon name={n} size={13} /> : n}
              </TopButton>
            ))}
          </TopTools>
          <DocumentWindow />
        </Center>
        <RightColumn />
      </Main>
      <Status>
        <StatusCell>Drücken Sie F1, um Hilfe zu erhalten.</StatusCell>
        <StatusCell $w={221} />
        <StatusCell $w={23} />
        <StatusCell $w={26}>NUM</StatusCell>
        <StatusCell $w={25} />
        <SizeGrip viewBox="0 0 14 11" aria-hidden="true">
          <path d="M11 3h1M8 6h1M11 6h1M5 9h1M8 9h1M11 9h1" stroke="#999" strokeWidth="1.500" />
        </SizeGrip>
      </Status>
    </Shell>
  );
}
